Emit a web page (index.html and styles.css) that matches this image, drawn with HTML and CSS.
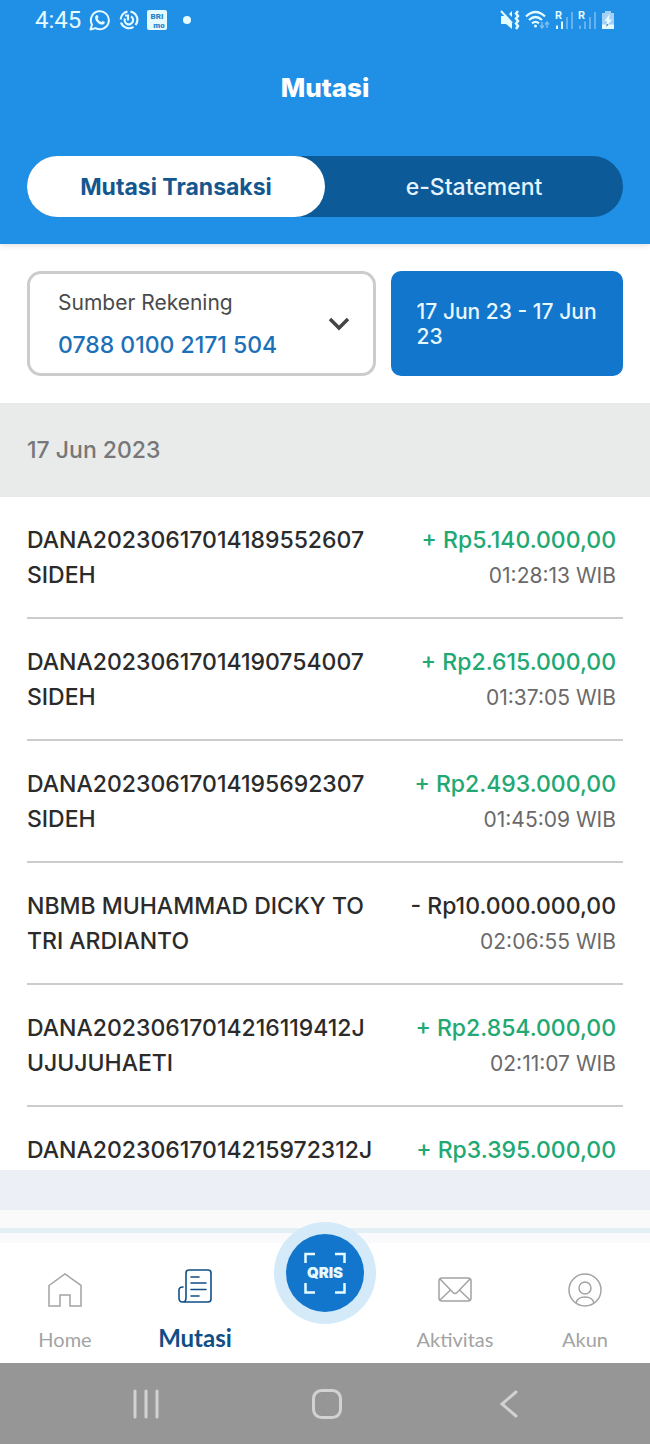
FILE: index.html
```html
<!DOCTYPE html>
<html lang="id">
<head>
  <meta charset="UTF-8" />
  <meta name="viewport" content="width=device-width, initial-scale=1" />
  <title>Mutasi</title>
  <link rel="stylesheet" href="styles.css">
</head>
<body>
  <header class="header">
    <!-- STATUS BAR -->
    <div class="status-bar">
      <div class="status-left">
        <span class="clock">4:45</span>
        <svg width="22" height="22" viewBox="0 0 22 22" fill="none" stroke="currentColor" stroke-width="2">
          <path d="M1.500 20.500 3 15.600a9 9 0 1 1 3.500 3.500z" stroke-linejoin="round" />
          <path d="M7.300 6.200c.7-.5 1.200-.3 1.500.3l.7 1.700-.9 1.300c.8 1.700 2 2.800 3.800 3.600l1.200-1.200 2.200 1.100c.3 1.500-1.200 2.700-2.700 2.600-3.500-.4-7-3.800-7-7.200 0-1 .5-1.700 1.200-2.200z" fill="currentColor" stroke="none" />
        </svg>
        <svg width="20" height="22" viewBox="0 0 20 22" fill="none" stroke="currentColor" stroke-width="2.200">
          <path d="M11.500 2.600a8.300 8.300 0 0 1 5 13.400M14.500 17.800A8.300 8.300 0 0 1 2 13.500M1.700 10.500A8.300 8.300 0 0 1 8.500 2.700" />
          <path d="M6 9.500a4.200 4.200 0 1 0 6-2M6 6.500l3 0v5" />
        </svg>
        <svg width="20" height="22" viewBox="0 0 20 22">
          <rect x="0" y="1" width="20" height="20" rx="2" fill="currentColor" />
          <text class="brimo" x="10" y="10" text-anchor="middle">BRI</text>
          <text class="brimo" x="12" y="19" text-anchor="middle">mo</text>
        </svg>
        <span class="dot"></span>
      </div>
      <div class="status-right">
        <svg width="20" height="20" viewBox="0 0 20 20" fill="currentColor">
          <path d="M1 6h4l7 7v6l-6-5H1zM9 4l3-3v6z" />
          <path d="m1 1 11 12" stroke="currentColor" stroke-width="2" />
          <path d="m18 1-2 2.500L18 6l-2 2.500 2 2.500-2 2.500 2 2.500-2 3" fill="none" stroke="currentColor" stroke-width="2.500" />
        </svg>
        <svg width="25" height="20" viewBox="0 0 25 20" fill="none" stroke="currentColor" stroke-width="2.200">
          <path d="M1 6.500q9.500-9 19 0M4 10q6.500-6 13 0M7 13.300q3.500-3 7 0" />
          <circle cx="10.500" cy="16" r="1.500" fill="currentColor" stroke="none" />
          <path d="M17 12v6M15 15.500l2 2.500 2-2.500M22 18v-6M20 14.500l2-2.500 2 2.500" stroke="#79bdf2" stroke-width="1.500" />
        </svg>
        <svg width="18" height="20" viewBox="0 0 18 20">
          <text class="roaming" x="0" y="9">R</text>
          <path d="M2 15.500V19M7 11.500V19" stroke="currentColor" stroke-width="2" />
          <path d="M12 7V19M17 2V19" stroke="#65b2ef" stroke-width="2" />
        </svg>
        <svg width="18" height="20" viewBox="0 0 18 20">
          <text class="roaming" x="0" y="9">R</text>
          <path d="M2 15.500V19M7 11.500V19M12 7V19M17 2V19" stroke="#65b2ef" stroke-width="2" />
        </svg>
        <svg width="14" height="20" viewBox="0 0 14 20">
          <path d="M4 1h6v2h3v12H1V3h3z" fill="#a5d1f6" />
          <path d="M1 14.500h12V19H1z" fill="currentColor" />
          <path d="M8.500 4 3.500 11H6l-.5 5.500L11 9.500H8z" fill="currentColor" />
          <path d="m5.700 14-.3 3 2-2.500z" fill="#356a99" />
        </svg>
      </div>
    </div>

    <h1>Mutasi</h1>

    <div class="tabs">
      <button class="tab active">Mutasi Transaksi</button>
      <button class="tab">e-Statement</button>
    </div>
  </header>

  <!-- FILTER -->
  <div class="filter">
    <div class="account">
      <label for="rekening">Sumber Rekening</label>
      <select id="rekening">
        <option>0788 0100 2171 504</option>
      </select>
      <svg class="chevron" width="22" height="14" viewBox="0 0 22 14" fill="none" stroke="#454545" stroke-width="3.500">
        <path d="m2 2 9 9 9-9" />
      </svg>
    </div>
    <button class="period">17 Jun 23 - 17 Jun 23</button>
  </div>

  <!-- DAFTAR MUTASI -->
  <h2 class="date">17 Jun 2023</h2>
  <ul class="list">
    <li class="item">
      <p class="name">DANA20230617014189552607 SIDEH</p>
      <div class="detail">
        <p class="amount in">+ Rp5.140.000,00</p>
        <p class="time">01:28:13 WIB</p>
      </div>
    </li>
    <li class="item">
      <p class="name">DANA20230617014190754007 SIDEH</p>
      <div class="detail">
        <p class="amount in">+ Rp2.615.000,00</p>
        <p class="time">01:37:05 WIB</p>
      </div>
    </li>
    <li class="item">
      <p class="name">DANA20230617014195692307 SIDEH</p>
      <div class="detail">
        <p class="amount in">+ Rp2.493.000,00</p>
        <p class="time">01:45:09 WIB</p>
      </div>
    </li>
    <li class="item">
      <p class="name">NBMB MUHAMMAD DICKY TO TRI ARDIANTO</p>
      <div class="detail">
        <p class="amount">- Rp10.000.000,00</p>
        <p class="time">02:06:55 WIB</p>
      </div>
    </li>
    <li class="item">
      <p class="name">DANA20230617014216119412J<br>UJUJUHAETI</p>
      <div class="detail">
        <p class="amount in">+ Rp2.854.000,00</p>
        <p class="time">02:11:07 WIB</p>
      </div>
    </li>
    <li class="item">
      <p class="name">DANA20230617014215972312J</p>
      <div class="detail">
        <p class="amount in">+ Rp3.395.000,00</p>
      </div>
    </li>
  </ul>

  <!-- MENU BAWAH -->
  <div class="strip"></div>
  <nav class="menu">
    <a href="#" class="menu-item">
      <svg width="34" height="36" viewBox="0 0 34 36" fill="none" stroke="currentColor" stroke-width="1.500">
        <path d="M1 13.500 17 2l16 11.500V34H22V23H12v11H1z" />
      </svg>
      <span>Home</span>
    </a>
    <a href="#" class="menu-item active">
      <svg width="34" height="36" viewBox="0 0 34 36" fill="none" stroke="currentColor" stroke-width="1.600" stroke-linecap="round">
        <path d="M5 34h25a3 3 0 0 0 3-3V5a3 3 0 0 0-3-3H11a3 3 0 0 0-3 3v25q0 4-3.500 4Q1 34 1 30V22q0-3 4-3" />
        <path d="M13 9h8M13 15h15M13 21.500h15M13 28h8" />
      </svg>
      <span>Mutasi</span>
    </a>
    <a href="#" class="menu-item scan" aria-label="QRIS">
      <svg width="102" height="102" viewBox="0 0 102 102">
        <circle cx="51" cy="51" r="51" fill="#d4eaf8" />
        <circle cx="51" cy="51" r="39" fill="#1276cc" />
        <path d="M31.500 41v-9H41M61 32h9.500v9M31.500 61v9.500H41M61 70.500h9.500V61" fill="none" stroke="#e6fbff" stroke-width="2.500" />
        <text class="qris" x="51" y="56" text-anchor="middle">QRIS</text>
      </svg>
    </a>
    <a href="#" class="menu-item">
      <svg width="34" height="36" viewBox="0 0 34 36" fill="none" stroke="currentColor" stroke-width="1.500">
        <rect x="1" y="6" width="32" height="23" rx="3" />
        <path d="m2 7 13 13.500q2 2 4 0L32 7M2 28l10.500-10M32 28 21.500 18" />
      </svg>
      <span>Aktivitas</span>
    </a>
    <a href="#" class="menu-item">
      <svg width="34" height="36" viewBox="0 0 34 36" fill="none" stroke="currentColor" stroke-width="1.500">
        <circle cx="17" cy="18" r="16" />
        <circle cx="17" cy="16" r="6" />
        <path d="M8 31c1-4 5-6 9-6s8 2 9 6" />
      </svg>
      <span>Akun</span>
    </a>
  </nav>

  <!-- TOMBOL SISTEM -->
  <div class="system-bar">
    <button aria-label="Aplikasi terbaru">
      <svg width="32" height="32" viewBox="0 0 32 32" fill="none" stroke="currentColor" stroke-width="3">
        <path d="M5 3v26M16 3v26M27 3v26" stroke-linecap="round" />
      </svg>
    </button>
    <button aria-label="Beranda">
      <svg width="32" height="32" viewBox="0 0 32 32" fill="none" stroke="currentColor" stroke-width="3">
        <rect x="2.500" y="2.500" width="27" height="27" rx="8" />
      </svg>
    </button>
    <button aria-label="Kembali">
      <svg width="32" height="32" viewBox="0 0 32 32" fill="none" stroke="currentColor" stroke-width="3">
        <path d="M23 4 9 16l14 12" stroke-linecap="round" />
      </svg>
    </button>
  </div>
</body>
</html>
```
FILE: styles.css
```css
* {
  box-sizing: border-box;
}

body {
  margin: 0;
  height: 100vh;
  display: flex;
  flex-direction: column;
  background-color: #fff;
  font-family: Inter, sans-serif;
  color: #2b2b2b;
}

svg {
  display: block;
  flex-shrink: 0;
}

h1, h2, p, ul {
  margin: 0;
  padding: 0;
}

button, select {
  border: none;
  background: none;
  padding: 0;
  font-family: inherit;
  color: inherit;
  cursor: pointer;
}

.header {
  background-color: #208fe6;
  color: #fff;
  padding: 0 27px 27px;
  box-shadow: 0 1px 6px rgba(0,0,0,0.15);
}

.status-bar {
  display: flex;
  justify-content: space-between;
  align-items: center;
  height: 40px;
  padding: 0 8px;
  color: #e4fbff;
}

.status-left, .status-right {
  display: flex;
  align-items: center;
  gap: 8px;
}

.status-right {
  gap: 5px;
}

.clock {
  font-family: Roboto, sans-serif;
  font-size: 24px;
}

.dot {
  width: 8px;
  height: 8px;
  margin-left: 8px;
  border-radius: 50%;
  background-color: currentColor;
}

.brimo {
  font-family: Roboto, sans-serif;
  font-size: 8px;
  font-weight: 900;
  fill: #2a83c9;
}

.roaming {
  font-family: Roboto, sans-serif;
  font-size: 11px;
  font-weight: 700;
  fill: currentColor;
}

h1 {
  padding: 32px 0;
  font-size: 26px;
  line-height: 32px;
  font-weight: 800;
  text-align: center;
}

.tabs {
  display: grid;
  grid-template-columns: 1fr 1fr;
  margin-top: 20px;
  border-radius: 31px;
  background-color: #0c5a98;
}

.tab {
  height: 61px;
  border-radius: 31px;
  color: #e4f4ff;
  font-size: 23px;
  font-weight: 500;
}

.tab.active {
  background-color: #fff;
  color: #14578f;
  font-weight: 700;
}

.filter {
  display: grid;
  grid-template-columns: 3fr 2fr;
  gap: 15px;
  padding: 27px;
}

.account {
  position: relative;
  display: flex;
  flex-direction: column;
  justify-content: center;
  gap: 16px;
  height: 105px;
  padding: 0 28px;
  border: 3px solid #ccc;
  border-radius: 14px;
}

.account label {
  font-size: 21px;
  line-height: 26px;
  color: #4a4a4a;
}

.account select {
  appearance: none;
  width: 100%;
  font-size: 23px;
  line-height: 26px;
  font-weight: 500;
  color: #1b70b8;
}

.chevron {
  position: absolute;
  right: 23px;
  top: 43px;
  pointer-events: none;
}

.period {
  padding: 0 26px;
  border-radius: 10px;
  background-color: #1276cc;
  color: #e8f8ff;
  font-size: 21px;
  line-height: 25px;
  font-weight: 500;
  text-align: left;
}

.date {
  padding: 32px 27px;
  background-color: #e8ebea;
  color: #777;
  font-size: 23px;
  line-height: 30px;
  font-weight: 500;
}

.list {
  flex: 1;
  min-height: 0;
  overflow: hidden;
  padding: 0 27px;
  list-style: none;
}

.item {
  display: flex;
  justify-content: space-between;
  gap: 28px;
  padding: 26px 7px 24px 0;
  border-bottom: 2px solid #ccc;
  font-size: 23px;
  line-height: 35px;
  font-weight: 500;
}

.detail {
  text-align: right;
  white-space: nowrap;
}

.amount.in {
  color: #21a873;
}

.time {
  font-size: 21px;
  font-weight: 400;
  color: #6a6a6a;
}

.strip {
  height: 58px;
  border-bottom: 18px solid #fafafb;
  background-color: #ecf0f6;
}

.menu {
  display: grid;
  grid-template-columns: repeat(5, 1fr);
  grid-template-rows: 100%;
  height: 135px;
  border-top: 5px solid #e2eff5;
  background: linear-gradient(#fafafc 10px, #fff 10px);
}

.menu-item {
  display: flex;
  flex-direction: column;
  align-items: center;
  justify-content: flex-end;
  gap: 18px;
  padding-bottom: 11px;
  font-family: Lato, sans-serif;
  font-size: 20px;
  line-height: 26px;
  color: #a3a3a3;
  text-decoration: none;
}

.menu-item.active {
  gap: 20px;
  font-size: 24px;
  line-height: 28px;
  font-weight: 700;
  color: #0f4f86;
}

.menu-item.scan {
  padding-bottom: 39px;
}

.qris {
  font-family: Inter, sans-serif;
  font-size: 15px;
  font-weight: 900;
  fill: #e6fbff;
}

.system-bar {
  display: flex;
  justify-content: space-around;
  align-items: center;
  height: 81px;
  padding: 0 50px 0 55px;
  background-color: #969696;
  color: #d2d2d2;
}
```
